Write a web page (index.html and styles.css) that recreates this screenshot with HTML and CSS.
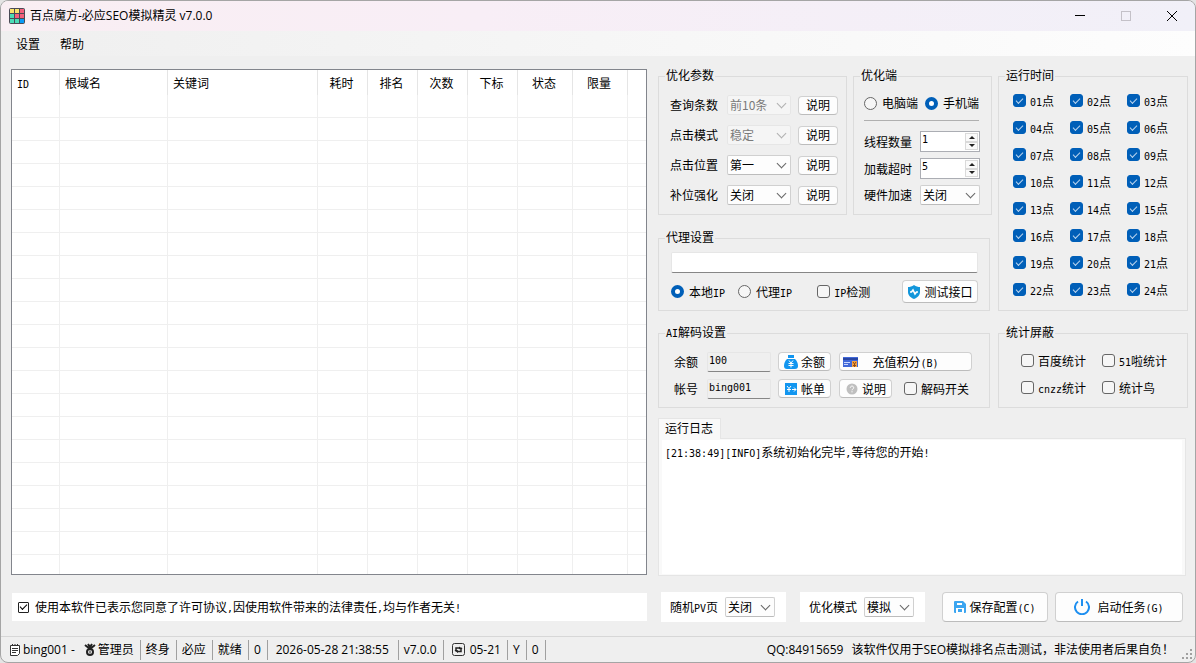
FILE: index.html
```html
<!DOCTYPE html>
<html lang="zh-CN">
<head>
    <meta charset="UTF-8">
    <meta name="viewport" content="width=device-width, initial-scale=1.0">
    <title>百点魔方-必应SEO模拟精灵 v7.0.0</title>
    <link rel="stylesheet" href="styles.css">
</head>
<body>
<div class="window">
    <header class="title-bar">
        <svg class="app-icon" width="16" height="16" viewBox="0 0 16 16">
            <rect width="16" height="16" rx="2" fill="#4a4a55"/>
            <path fill="#fbe36b" d="M1 1h4v4H1zM6 1h4v4H6z"/>
            <path fill="#f4607c" d="M11 1h4v4h-4zM6 6h4v4H6zM11 6h4v4h-4z"/>
            <path fill="#4bdcb6" d="M1 6h4v4H1zM1 11h4v4H1zM6 11h4v4H6z"/>
            <path fill="#0a9cf5" d="M11 11h4v4h-4z"/>
        </svg>
        <h1>百点魔方-必应SEO模拟精灵 v7.0.0</h1>
        <div class="window-buttons">
            <button type="button" aria-label="最小化"><svg width="12" height="12" viewBox="0 0 12 12"><path d="M1 5.500h10"/></svg></button>
            <button type="button" aria-label="最大化" disabled><svg width="12" height="12" viewBox="0 0 12 12"><rect x="1.500" y="1.500" width="9" height="9"/></svg></button>
            <button type="button" aria-label="关闭"><svg width="12" height="12" viewBox="0 0 12 12"><path d="M1 1l10 10M11 1L1 11"/></svg></button>
        </div>
    </header>

    <nav class="menu-bar">
        <button type="button">设置</button>
        <button type="button">帮助</button>
    </nav>

    <main class="content">
        <section class="left">
            <div class="task-list">
                <table>
                    <colgroup>
                        <col class="c-id"><col class="c-domain"><col class="c-keyword">
                        <col class="c-num"><col class="c-num"><col class="c-num"><col class="c-num">
                        <col class="c-state"><col class="c-state"><col>
                    </colgroup>
                    <thead>
                        <tr>
                            <th class="start"><span class="mono">ID</span></th>
                            <th class="start">根域名</th>
                            <th class="start">关键词</th>
                            <th>耗时</th>
                            <th>排名</th>
                            <th>次数</th>
                            <th>下标</th>
                            <th>状态</th>
                            <th>限量</th>
                            <th></th>
                        </tr>
                    </thead>
                    <tbody id="task-rows"></tbody>
                </table>
            </div>
            <label class="agreement"><input type="checkbox" class="mini" checked><span>使用本软件已表示您同意了许可协议<span class="mono">,</span>因使用软件带来的法律责任<span class="mono">,</span>均与作者无关<span class="mono">!</span></span></label>
        </section>

        <section class="right">
            <div class="groups">
                <div class="stack">
                    <div class="pair">
                        <fieldset>
                            <legend>优化参数</legend>
                            <div class="params">
                                <div class="param">
                                    <label for="count">查询条数</label>
                                    <span class="pick off"><select id="count" disabled><option>前10条</option></select></span>
                                    <button type="button" class="btn">说明</button>
                                </div>
                                <div class="param">
                                    <label for="click-mode">点击模式</label>
                                    <span class="pick off"><select id="click-mode" disabled><option>稳定</option></select></span>
                                    <button type="button" class="btn">说明</button>
                                </div>
                                <div class="param">
                                    <label for="click-pos">点击位置</label>
                                    <span class="pick"><select id="click-pos"><option>第一</option></select></span>
                                    <button type="button" class="btn">说明</button>
                                </div>
                                <div class="param">
                                    <label for="fill">补位强化</label>
                                    <span class="pick"><select id="fill"><option>关闭</option></select></span>
                                    <button type="button" class="btn">说明</button>
                                </div>
                            </div>
                        </fieldset>

                        <fieldset>
                            <legend>优化端</legend>
                            <div class="device">
                                <div class="device-type">
                                    <label class="check"><input type="radio" name="device">电脑端</label>
                                    <label class="check"><input type="radio" name="device" checked>手机端</label>
                                </div>
                                <hr>
                                <div class="device-row">
                                    <label for="threads">线程数量</label>
                                    <span class="spin"><input id="threads" type="number" value="1"><span class="arrows"><button type="button" aria-label="增加" class="up"></button><button type="button" aria-label="减少" class="down"></button></span></span>
                                </div>
                                <div class="device-row">
                                    <label for="timeout">加载超时</label>
                                    <span class="spin"><input id="timeout" type="number" value="5"><span class="arrows"><button type="button" aria-label="增加" class="up"></button><button type="button" aria-label="减少" class="down"></button></span></span>
                                </div>
                                <div class="device-row">
                                    <label for="gpu">硬件加速</label>
                                    <span class="pick"><select id="gpu"><option>关闭</option></select></span>
                                </div>
                            </div>
                        </fieldset>
                    </div>

                    <fieldset class="wide">
                        <legend>代理设置</legend>
                        <div class="proxy">
                            <input type="text" class="text" aria-label="代理设置">
                            <div class="proxy-row">
                                <label class="check"><input type="radio" name="proxy" checked><span>本地<span class="mono">IP</span></span></label>
                                <label class="check"><input type="radio" name="proxy"><span>代理<span class="mono">IP</span></span></label>
                                <label class="check ip-check"><input type="checkbox"><span><span class="mono">IP</span>检测</span></label>
                                <button type="button" class="btn test">
                                    <svg width="14" height="14" viewBox="0 0 14 14"><path fill="#1296db" d="M7 0c2 1.500 4 2 6 2v5c0 3.500-2.500 5.500-6 7-3.500-1.500-6-3.500-6-7V2c2 0 4-.5 6-2z"/><path fill="none" stroke="#fff" stroke-width="1.600" d="M3 7h1.500L6 5l2 4 1.500-2H11"/></svg>
                                    测试接口
                                </button>
                            </div>
                        </div>
                    </fieldset>
                </div>

                <fieldset>
                    <legend>运行时间</legend>
                    <div class="hour-grid" id="hour-grid"></div>
                </fieldset>

                <fieldset class="wide">
                    <legend><span class="mono">AI</span>解码设置</legend>
                    <div class="decode-grid">
                        <label for="balance">余额</label>
                        <input id="balance" type="text" class="text mono" value="100" readonly>
                        <button type="button" class="btn icon-btn">
                            <svg width="14" height="14" viewBox="0 0 14 14"><path fill="#1296f0" d="M4 0h6v3H4zM3 4h8c2 2 3 4 3 7 0 2-1 3-3 3H3c-2 0-3-1-3-3 0-3 1-5 3-7z"/><path fill="none" stroke="#fff" d="M5 5.500l2 2.500 2-2.500M4.500 8.500h5M4.500 10.500h5M7 8v4.500"/></svg>
                            余额
                        </button>
                        <button type="button" class="btn recharge">
                            <svg width="15" height="12" viewBox="0 0 15 12"><path fill="#4168d8" d="M0 1h15v10H0z"/><path fill="#2745a4" d="M0 2h15v2H0z"/><path stroke="#c9d6ff" d="M1 6.500h6M1 8.500h4"/><path fill="#f8a13f" d="M9 5h5v6H9z"/><path fill="none" stroke="#8d4a1a" d="M10 6l1.500 2L13 6M11.500 8v3M10 9.500h3"/></svg>
                            <span>充值积分<span class="mono">(B)</span></span>
                        </button>
                        <label for="account">帐号</label>
                        <input id="account" type="text" class="text mono" value="bing001" readonly>
                        <button type="button" class="btn icon-btn">
                            <svg width="14" height="14" viewBox="0 0 14 14"><path fill="#1296f0" d="M1 1h12v12H1z"/><path fill="none" stroke="#fff" d="M3 4l2 2.500L7 4M5 6.500V10M3 7.500h4M8 7.500h4M10 5.500l2 2-2 2"/></svg>
                            帐单
                        </button>
                        <div class="decode-more">
                            <button type="button" class="btn icon-btn">
                                <svg width="14" height="14" viewBox="0 0 14 14"><circle cx="7" cy="7" r="5.500" fill="#bfbfbf"/><path fill="none" stroke="#fff" d="M5.300 5.800c0-2.300 3.400-2.300 3.400 0C8.700 7 7 7 7 8.300M7 9.200v1.200"/></svg>
                                说明
                            </button>
                            <label class="check"><input type="checkbox">解码开关</label>
                        </div>
                    </div>
                </fieldset>

                <fieldset>
                    <legend>统计屏蔽</legend>
                    <div class="stats-grid">
                        <label class="check"><input type="checkbox">百度统计</label>
                        <label class="check"><input type="checkbox"><span><span class="mono">51</span>啦统计</span></label>
                        <label class="check"><input type="checkbox"><span><span class="mono">cnzz</span>统计</span></label>
                        <label class="check"><input type="checkbox">统计鸟</label>
                    </div>
                </fieldset>
            </div>

            <div class="log">
                <button type="button" class="tab">运行日志</button>
                <div class="log-panel">
                    <div class="log-text" role="log"><span class="mono">[21:38:49][INFO]</span>系统初始化完毕<span class="mono">,</span>等待您的开始<span class="mono">!</span></div>
                </div>
            </div>

            <div class="actions">
                <div class="option">
                    <label for="pv">随机<span class="mono">PV</span>页</label>
                    <span class="pick"><select id="pv"><option>关闭</option></select></span>
                </div>
                <div class="option">
                    <label for="mode">优化模式</label>
                    <span class="pick"><select id="mode"><option>模拟</option></select></span>
                </div>
                <button type="button" class="btn save">
                    <svg width="12" height="12" viewBox="0 0 12 12"><path fill="#3ba5f0" d="M1 0h8l3 3v8q0 1-1 1H1q-1 0-1-1V1q0-1 1-1z"/><path fill="#fff" d="M3 2h5v2H3zM2 7h8v5H2z"/><path fill="#3ba5f0" d="M4 8h4v3H4z"/></svg>
                    <span>保存配置<span class="mono">(C)</span></span>
                </button>
                <button type="button" class="btn start-task">
                    <svg width="16" height="16" viewBox="0 0 16 16"><path fill="none" stroke="#1e8ff0" stroke-width="2" d="M4 2.500a7 7 0 1 0 8 0M8 0v7"/></svg>
                    <span>启动任务<span class="mono">(G)</span></span>
                </button>
            </div>
        </section>
    </main>

    <footer class="status-bar">
        <span class="cell user">
            <svg width="12" height="14" viewBox="0 0 12 14"><path fill="#fff" stroke="#333" d="M1.500 2.500h9v8l-2 2h-7z"/><path stroke="#333" d="M3.500 1v2M6 1v2M8.500 1v2M3 5.500h6M3 7.500h6M3 9.500h4"/></svg>
            bing001 -
            <svg class="medal" width="12" height="14" viewBox="0 0 12 14"><path fill="none" stroke="#222" stroke-width="2" d="M1 2l5 4 5-4M4 1l2 3 2-3"/><circle cx="6" cy="9" r="3" fill="#efefef" stroke="#222" stroke-width="2"/><path stroke="#222" d="M6 7.500v3"/></svg>管理员
        </span>
        <span class="cell">终身</span>
        <span class="cell">必应</span>
        <span class="cell">就绪</span>
        <span class="cell">0</span>
        <span class="cell clock">2026-05-28 21:38:55</span>
        <span class="cell">v7.0.0</span>
        <span class="cell expire">
            <svg width="13" height="13" viewBox="0 0 13 13"><rect x=".5" y=".5" width="12" height="12" rx="2" fill="#eee" stroke="#333"/><path fill="none" stroke="#222" stroke-width="1.500" d="M4 8V5h4M9 5.500v3H5"/><path fill="#222" d="M2.500 7h3L4 9zM7.500 6h3L9 4zM7 3.500v3L9 5zM6 7v3L4 8.500z"/></svg>
            05-21
        </span>
        <span class="cell">Y</span>
        <span class="cell">0</span>
        <span class="notice"><span>QQ:84915659</span><span>该软件仅用于SEO模拟排名点击测试，非法使用者后果自负！</span></span>
        <svg class="grip" width="11" height="11" viewBox="0 0 11 11"><path fill="#a0a0a0" d="M8 0h2v2H8zM4 4h2v2H4zM8 4h2v2H8zM0 8h2v2H0zM4 8h2v2H4zM8 8h2v2H8z"/></svg>
    </footer>
</div>

<script>
    // Empty rows of the task list, the last one is cut by the frame
    const rows = document.getElementById("task-rows");
    for (let i = 0; i < 21; i++) {
        rows.innerHTML += "<tr>" + "<td></td>".repeat(10) + "</tr>";
    }

    // Run hours 01 - 24
    const hours = document.getElementById("hour-grid");
    for (let h = 1; h <= 24; h++) {
        const n = String(h).padStart(2, "0");
        hours.innerHTML += `<label class="check"><input type="checkbox" checked><span><span class="mono">${n}</span>点</span></label>`;
    }
</script>
</body>
</html>
```

FILE: styles.css
```css
* {
    box-sizing: border-box;
}

body {
    margin: 0;
    background: #e4e4e4;
    color: #000;
    font: 12px/14px "Noto Sans CJK SC", sans-serif;
}

button, input, select {
    margin: 0;
    font: inherit;
    color: inherit;
}

/* half-width characters take 6px next to 12px hanzi */
.mono {
    font-family: "DejaVu Sans Mono", monospace;
    font-size: 10px;
    line-height: 0;
}

.window {
    display: flex;
    flex-direction: column;
    min-height: 100vh;
    background: #efefef;
    border: 1px solid #a5a5a5;
    border-radius: 8px;
    overflow: hidden;
}

/* Title bar */
.title-bar {
    display: flex;
    align-items: center;
    height: 30px;
    padding-left: 8px;
    background: linear-gradient(90deg, #f9eef3, #f8eef6 40%, #f1f0f8);
}

.title-bar h1 {
    flex: 1;
    margin: 0 0 0 5px;
    font: 12px/14px "Open Sans", "Noto Sans CJK SC", sans-serif;
}

.window-buttons {
    display: flex;
}

.window-buttons button {
    display: flex;
    align-items: center;
    justify-content: center;
    width: 46px;
    height: 30px;
    padding: 0;
    border: 0;
    background: none;
}

.window-buttons svg {
    fill: none;
    stroke: #000;
}

.window-buttons button:disabled svg {
    stroke: #c4c1c8;
}

.menu-bar {
    display: flex;
    gap: 20px;
    height: 25px;
    padding-left: 15px;
    background: linear-gradient(90deg, #efefef, #fdfdfd);
}

.menu-bar button {
    padding: 0;
    border: 0;
    background: none;
}

.content {
    flex: 1;
    display: grid;
    grid-template-columns: minmax(0, 1fr) 530px;
    gap: 11px;
    padding: 13px 7px 14px 10px;
}

.left {
    display: flex;
    flex-direction: column;
    gap: 18px;
}

/* Task list */
.task-list {
    flex: 1 1 0;
    min-height: 300px;
    overflow: hidden;
    background: #fff;
    border: 1px solid #82858c;
}

.task-list table {
    width: 100%;
    table-layout: fixed;
    border-spacing: 0;
}

.c-id { width: 48px; }
.c-domain { width: 108px; }
.c-keyword { width: 150px; }
.c-num { width: 50px; }
.c-state { width: 55px; }

.task-list th {
    height: 25px;
    padding: 0 2px 0 0;
    font-weight: normal;
    border-right: 1px solid #e5e5e5;
}

.task-list th.start {
    padding-left: 5px;
    text-align: left;
}

.task-list td {
    height: 23px;
    padding: 0;
    border-right: 1px solid #efefef;
    border-bottom: 1px solid #efefef;
}

.task-list th:last-child,
.task-list td:last-child {
    border-right: 0;
}

.agreement {
    display: flex;
    align-items: center;
    gap: 6px;
    height: 28px;
    margin: 0 0 1px 1px;
    padding-left: 6px;
    background: #fff;
}

/* Group boxes */
.right {
    display: flex;
    flex-direction: column;
}

.groups {
    display: grid;
    grid-template-columns: 334px 190px;
    gap: 15px 6px;
}

.stack {
    display: flex;
    flex-direction: column;
    gap: 16px;
}

.pair {
    display: grid;
    grid-template-columns: 189px 139px;
    gap: 6px;
}

fieldset {
    min-width: 0;
    margin: 0;
    padding: 0;
    border: 1px solid #dcdcdc;
}

fieldset.wide {
    width: 332px;
}

legend {
    height: 14px;
    margin-left: 6px;
    padding: 0 1px;
    line-height: 12px;
}

.params {
    display: flex;
    flex-direction: column;
    gap: 10px;
    padding: 12px 8px 9px 11px;
}

.param {
    display: grid;
    grid-template-columns: 57px 64px 40px;
    align-items: center;
    height: 20px;
}

.param .btn {
    margin-left: 7px;
    width: 40px;
}

.btn {
    display: flex;
    align-items: center;
    justify-content: center;
    height: 19px;
    padding: 0;
    background: #fdfdfd;
    border: 1px solid #d0d0d0;
    border-bottom-color: #bcbcbc;
    border-radius: 4px;
    white-space: nowrap;
}

/* Drop-downs */
.pick {
    position: relative;
    display: block;
}

.pick select {
    display: block;
    width: 100%;
    height: 20px;
    padding: 0 2px;
    appearance: none;
    background: #fdfdfd;
    border: 1px solid #d0d0d0;
    border-bottom-color: #bcbcbc;
    border-radius: 2px;
}

.pick::after {
    content: "";
    position: absolute;
    right: 6px;
    top: 5px;
    width: 6px;
    height: 6px;
    border: solid #666;
    border-width: 0 1px 1px 0;
    transform: rotate(45deg);
    pointer-events: none;
}

.pick.off select {
    color: #7a7a7a;
    background: #f5f5f5;
    border-color: #e6e6e6;
    opacity: 1;
}

.pick.off::after {
    border-color: #b0b0b0;
}

/* Radios and tick boxes */
.check {
    display: flex;
    align-items: center;
    gap: 5px;
    white-space: nowrap;
}

input[type="checkbox"],
input[type="radio"] {
    display: flex;
    align-items: center;
    justify-content: center;
    flex: none;
    width: 13px;
    height: 13px;
    appearance: none;
    background: #f6f6f6;
    border: 1px solid #666;
    border-radius: 3px;
}

input[type="radio"] {
    border-radius: 50%;
}

input[type="radio"]:checked {
    background: #fff;
    border: 4px solid #005fb8;
}

input[type="checkbox"]:checked {
    background: #005fb8;
    border-color: #005fb8;
}

input[type="checkbox"]:checked::before {
    content: "";
    width: 6px;
    height: 3px;
    margin-bottom: 2px;
    border: solid #b9d4ee;
    border-width: 0 0 1px 1px;
    transform: rotate(-45deg);
}

input[type="checkbox"].mini {
    width: 11px;
    height: 11px;
    background: #fff;
    border-color: #222;
    border-radius: 1px;
}

input[type="checkbox"].mini::before {
    border-color: #000;
}

.device {
    padding: 10px 12px 9px 10px;
}

.device-type {
    display: flex;
    justify-content: space-between;
    height: 20px;
}

hr {
    height: 1px;
    margin: 7px 0 10px;
    border: 0;
    background: #b0b0b0;
}

.device-row {
    display: grid;
    grid-template-columns: 56px 60px;
    align-items: center;
    height: 20px;
}

.device-row + .device-row {
    margin-top: 7px;
}

.spin {
    display: flex;
    height: 21px;
    background: #fff;
    border: 1px solid #abadb3;
}

.spin input {
    flex: 1;
    min-width: 0;
    padding: 0 1px 4px;
    border: 0;
    appearance: textfield;
    background: none;
    font: 10px/14px "DejaVu Sans Mono", monospace;
}

.spin input::-webkit-inner-spin-button {
    display: none;
}

.arrows {
    display: flex;
    flex-direction: column;
    width: 15px;
    padding: 1px;
}

.arrows button {
    flex: 1;
    display: flex;
    align-items: center;
    justify-content: center;
    padding: 0;
    background: #fafafa;
    border: 1px solid #dadada;
}

.arrows button::before {
    content: "";
    border: 3px solid transparent;
}

.arrows .up::before {
    border-top: 0;
    border-bottom-color: #222;
}

.arrows .down::before {
    border-bottom: 0;
    border-top-color: #222;
}

/* Proxy */
.proxy {
    padding: 7px 11px 7px 12px;
}

.text {
    display: block;
    width: 100%;
    height: 21px;
    padding: 0 2px;
    border: 1px solid #e6e6e6;
    border-bottom-color: #868686;
    border-radius: 2px;
    background: #fff;
    line-height: 14px;
}

.text:read-only {
    height: 20px;
    padding: 0 1px 2px;
    background: #efefef;
}

.proxy-row {
    display: flex;
    align-items: center;
    gap: 13px;
    margin-top: 7px;
}

.ip-check {
    margin-left: 12px;
}

.test {
    gap: 3px;
    width: 76px;
    height: 23px;
    margin-left: auto;
}

/* Run hours */
.hour-grid {
    display: grid;
    grid-template-columns: repeat(3, 57px);
    grid-auto-rows: 27px;
    padding: 4px 0 7px 14px;
}

/* Decode settings */
.decode-grid {
    display: grid;
    grid-template-columns: 33px 64px 7px 53px 8px 133px;
    grid-auto-rows: 19px;
    row-gap: 8px;
    align-items: center;
    padding: 12px 0 9px 15px;
}

.decode-grid > .icon-btn {
    grid-column: 4;
}

.decode-grid > .recharge,
.decode-more {
    grid-column: 6;
}

.icon-btn {
    gap: 3px;
    width: 53px;
}

.recharge {
    position: relative;
}

.recharge svg {
    position: absolute;
    left: 3px;
    top: 3px;
}

.decode-more {
    display: flex;
    align-items: center;
    gap: 12px;
}

.stats-grid {
    display: grid;
    grid-template-columns: 81px 81px;
    grid-auto-rows: 27px;
    padding: 7px 0 0 22px;
}

.hour-grid .check,
.stats-grid .check,
.decode-more .check,
.ip-check {
    gap: 4px;
}

/* Log */
.log {
    flex: 1;
    display: flex;
    flex-direction: column;
    align-items: flex-start;
    margin: 10px 2px 0 0;
}

.tab {
    height: 21px;
    margin-bottom: -1px;
    padding: 0 7px 2px 6px;
    background: #f9f9f9;
    border: 1px solid #e5e5e5;
    border-bottom: 0;
    z-index: 1;
}

.log-panel {
    flex: 1;
    display: flex;
    align-self: stretch;
    min-height: 80px;
    padding: 1px 3px;
    background: #f9f9f9;
    border: 1px solid #e5e5e5;
}

.log-text {
    flex: 1;
    padding: 5px 3px;
    background: #fff;
}

/* Bottom controls */
.actions {
    display: flex;
    margin: 16px 5px 0 3px;
}

.option {
    display: flex;
    align-items: center;
    width: 125px;
    height: 30px;
    margin-right: 14px;
    padding-left: 9px;
    background: #fff;
}

.option .pick {
    width: 50px;
    margin-left: 7px;
}

.save,
.start-task {
    height: 30px;
}

.save {
    gap: 3px;
    width: 106px;
    margin-left: auto;
}

.start-task {
    gap: 7px;
    width: 128px;
    margin-left: 7px;
}

/* Status bar */
.status-bar {
    display: flex;
    align-items: center;
    height: 26px;
    padding-left: 8px;
    border-top: 1px solid #d7d7d7;
    font-family: "Open Sans", "Noto Sans CJK SC", sans-serif;
    white-space: nowrap;
}

.cell {
    display: flex;
    align-items: center;
    height: 20px;
    padding: 0 6px 0 5px;
    border-right: 1px solid #a0a0a0;
}

.cell.user {
    gap: 2px;
    padding-left: 0;
}

.medal {
    margin-left: 7px;
}

.cell.clock {
    width: 131px;
    justify-content: center;
}

.cell.expire {
    gap: 5px;
    padding-left: 8px;
}

.notice {
    display: flex;
    gap: 8px;
    margin-left: auto;
}

.grip {
    align-self: flex-end;
    margin: 0 2px 2px 8px;
}
```
